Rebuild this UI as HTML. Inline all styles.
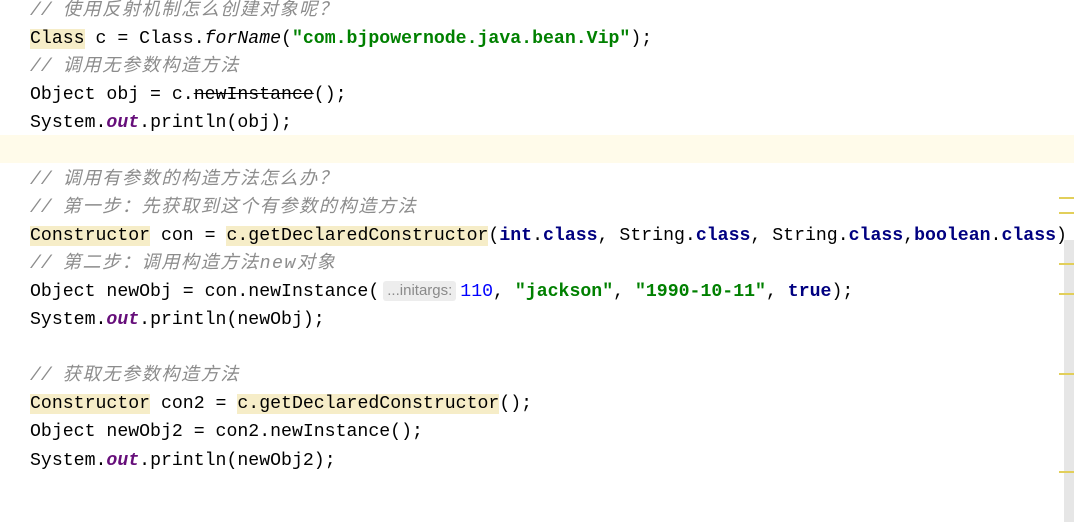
<!DOCTYPE html>
<html><head><meta charset="utf-8"><style>
html,body{margin:0;padding:0;width:1074px;height:522px;overflow:hidden;background:#fff;}
.code{position:absolute;left:30px;top:-3px;font-family:"Liberation Mono","Noto Sans CJK SC",monospace;font-size:18.2px;line-height:28.1px;color:#000;white-space:pre;}
.cur{position:absolute;left:0;top:135px;width:1074px;height:28px;background:#fffbea;}
.c{color:#8c8c8c;font-style:italic;font-family:"Liberation Mono","Noto Sans CJK SC",monospace;}
.cj{letter-spacing:1.5px;}
.k{color:#000080;font-weight:bold;}
.s{color:#008000;font-weight:bold;}
.o{color:#660e7a;font-weight:bold;font-style:italic;}
.n{color:#0000ff;}
.h{background:#f6edc8;}
.st{text-decoration:line-through;}
.fi{font-style:italic;}
.hint{display:inline-block;background:#ededed;color:#8a8a8a;font-family:"Liberation Sans",sans-serif;font-size:15px;line-height:20px;padding:0 4px;border-radius:3px;margin:0 4px 0 4px;vertical-align:1px;}
.sb{position:absolute;left:1064px;top:240px;width:10px;height:282px;background:#e6e6e6;}
.m{position:absolute;left:1059px;width:15px;height:2px;background:#e2cf5a;}
</style></head><body>
<div class="cur"></div>
<div class="sb"></div>
<div class="m" style="top:197px"></div>
<div class="m" style="top:212px"></div>
<div class="m" style="top:263px"></div>
<div class="m" style="top:293px"></div>
<div class="m" style="top:373px"></div>
<div class="m" style="top:471px"></div>
<div class="code"><span class="c">// <span class="cj">使用反射机制怎么创建对象呢？</span></span>
<span class="h">Class</span> c = Class.<span class="fi">forName</span>(<span class="s">"com.bjpowernode.java.bean.Vip"</span>);
<span class="c">// <span class="cj">调用无参数构造方法</span></span>
Object obj = c.<span class="st">newInstance</span>();
System.<span class="o">out</span>.println(obj);

<span class="c">// <span class="cj">调用有参数的构造方法怎么办？</span></span>
<span class="c">// <span class="cj">第一步：先获取到这个有参数的构造方法</span></span>
<span class="h">Constructor</span> con = <span class="h">c.getDeclaredConstructor</span>(<span class="k">int</span>.<span class="k">class</span>, String.<span class="k">class</span>, String.<span class="k">class</span>,<span class="k">boolean</span>.<span class="k">class</span>)
<span class="c">// <span class="cj">第二步：调用构造方法new对象</span></span>
Object newObj = con.newInstance(<span class="hint">...initargs:</span><span class="n">110</span>, <span class="s">"jackson"</span>, <span class="s">"1990-10-11"</span>, <span class="k">true</span>);
System.<span class="o">out</span>.println(newObj);

<span class="c">// <span class="cj">获取无参数构造方法</span></span>
<span class="h">Constructor</span> con2 = <span class="h">c.getDeclaredConstructor</span>();
Object newObj2 = con2.newInstance();
System.<span class="o">out</span>.println(newObj2);</div>
</body></html>
